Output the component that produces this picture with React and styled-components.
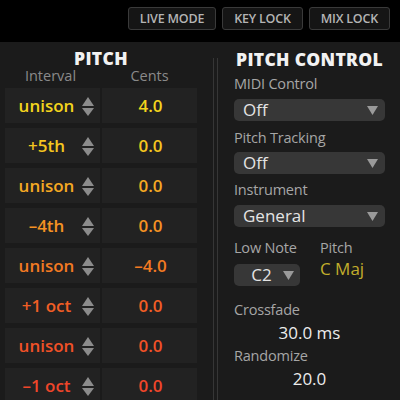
import React from 'react'
import styled, { createGlobalStyle } from 'styled-components'

const GlobalStyle = createGlobalStyle`
  html, body {
    margin: 0;
    padding: 0;
    background: #1b1b1b;
  }
  body {
    font-family: "Open Sans", "Noto Sans", sans-serif;
  }
`

const rows = [
  { interval: 'unison', cents: '4.0', color: '#f4d51d' },
  { interval: '+5th', cents: '0.0', color: '#f5c61f' },
  { interval: 'unison', cents: '0.0', color: '#f5a923' },
  { interval: '\u20134th', cents: '0.0', color: '#f59223' },
  { interval: 'unison', cents: '\u20134.0', color: '#f37a22' },
  { interval: '+1 oct', cents: '0.0', color: '#f25e25' },
  { interval: 'unison', cents: '0.0', color: '#f15127' },
  { interval: '\u20131 oct', cents: '0.0', color: '#f0462a' },
]

function Stepper() {
  return (
    <svg width="12" height="19" viewBox="0 0 12 19">
      <path d="M6 0 L12 9 L0 9 Z" fill="#8c8c8c" />
      <path d="M0 11 L12 11 L6 19 Z" fill="#8c8c8c" />
    </svg>
  )
}

function Caret() {
  return (
    <svg width="11" height="9" viewBox="0 0 11 9">
      <path d="M0 0 L11 0 L5.5 9 Z" fill="#9a9a9a" />
    </svg>
  )
}

function App() {
  return (
    <Page>
      <GlobalStyle />
      <TopBar>
        <ModeButton>LIVE MODE</ModeButton>
        <ModeButton>KEY LOCK</ModeButton>
        <ModeButton>MIX LOCK</ModeButton>
      </TopBar>

      <Main>
        <PitchColumn>
          <PitchTitle>PITCH</PitchTitle>
          <HeaderRow>
            <span>Interval</span>
            <span>Cents</span>
          </HeaderRow>
          <Grid>
            {rows.map((r, i) => (
              <React.Fragment key={i}>
                <IntervalCell $color={r.color}>
                  <span>{r.interval}</span>
                  <StepBox><Stepper /></StepBox>
                </IntervalCell>
                <CentsCell $color={r.color}>{r.cents}</CentsCell>
              </React.Fragment>
            ))}
          </Grid>
        </PitchColumn>

        <Divider />

        <ControlColumn>
          <Title>PITCH CONTROL</Title>
          <Label $top={7}>MIDI Control</Label>
          <Select $top={7}><span>Off</span><Caret /></Select>
          <Label $top={9}>Pitch Tracking</Label>
          <Select $top={6}><span>Off</span><Caret /></Select>
          <Label $top={8}>Instrument</Label>
          <Select $top={7}><span>General</span><Caret /></Select>

          <NoteRow>
            <NoteField>
              <Label>Low Note</Label>
              <SmallSelect><span>C2</span><Caret /></SmallSelect>
            </NoteField>
            <NoteField>
              <Label>Pitch</Label>
              <KeyValue>C Maj</KeyValue>
            </NoteField>
          </NoteRow>

          <Label $top={16}>Crossfade</Label>
          <Value>30.0 ms</Value>
          <Label $top={6}>Randomize</Label>
          <Value>20.0</Value>
        </ControlColumn>
      </Main>
    </Page>
  )
}

const Page = styled.div`
  width: 400px;
  height: 400px;
  overflow: hidden;
  background: #1b1b1b;
`

const TopBar = styled.div`
  height: 42px;
  background: #000;
  display: flex;
  justify-content: flex-end;
  align-items: flex-start;
  gap: 6px;
  padding: 7px 10px 0 0;
  box-sizing: border-box;
`

const ModeButton = styled.div`
  height: 23px;
  box-sizing: border-box;
  padding: 0 11px;
  display: flex;
  align-items: center;
  border: 1px solid #3a3a3a;
  border-radius: 3px;
  background: #151515;
  color: #b4b4b4;
  font-size: 12.5px;
  font-weight: 600;
  letter-spacing: -0.2px;
`

const Main = styled.div`
  display: flex;
  height: 358px;
  background: #1b1b1b;
`

const PitchColumn = styled.div`
  width: 212px;
  padding: 6px 0 0 5px;
  box-sizing: border-box;
  display: flex;
  flex-direction: column;
`

const Title = styled.div`
  text-align: center;
  color: #f2f2f2;
  font-weight: 800;
  font-size: 17.5px;
  line-height: 20px;
  letter-spacing: 0.3px;
`

const PitchTitle = styled(Title)`
  width: 192px;
`

const HeaderRow = styled.div`
  display: grid;
  grid-template-columns: 95px 95px;
  column-gap: 2px;
  color: #8a8a8a;
  font-size: 14.5px;
  line-height: 16px;
  span {
    text-align: center;
  }
  span:first-child {
    padding-right: 4px;
  }
`

const Grid = styled.div`
  margin-top: 4px;
  display: grid;
  grid-template-columns: 95px 95px;
  grid-auto-rows: 35px;
  column-gap: 2px;
  row-gap: 5px;
`

const Cell = styled.div`
  background: #222222;
  color: ${p => p.$color};
  font-size: 17px;
  font-weight: 600;
  display: flex;
  align-items: center;
`

const IntervalCell = styled(Cell)`
  span {
    flex: 1;
    text-align: center;
    padding-left: 6px;
  }
`

const StepBox = styled.div`
  width: 16px;
  display: flex;
  padding-right: 2px;
  padding-top: 1px;
`

const CentsCell = styled(Cell)`
  justify-content: center;
  padding-left: 2px;
`

const Divider = styled.div`
  margin-top: 16px;
  width: 3px;
  margin-left: 1px;
  border-left: 1px solid #363636;
  border-right: 1px solid #363636;
`

const ControlColumn = styled.div`
  flex: 1;
  padding: 7px 15px 0 16px;
  display: flex;
  flex-direction: column;
  align-items: stretch;
`

const Label = styled.div`
  margin-top: ${p => p.$top || 0}px;
  color: #a6a6a6;
  font-size: 14.5px;
  line-height: 16px;
  letter-spacing: -0.2px;
`

const Select = styled.div`
  margin-top: ${p => p.$top || 0}px;
  height: 22px;
  border-radius: 5px;
  background: #373737;
  display: flex;
  align-items: center;
  justify-content: space-between;
  padding: 0 7px 0 9px;
  color: #e4e4e4;
  font-size: 17px;
  span {
    line-height: 22px;
  }
`

const NoteRow = styled.div`
  margin-top: 13px;
  display: flex;
  gap: 20px;
`

const NoteField = styled.div`
  display: flex;
  flex-direction: column;
  gap: 8px;
`

const SmallSelect = styled(Select)`
  width: 66px;
  box-sizing: border-box;
  padding: 0 6px 0 0;
  span {
    flex: 1;
    text-align: center;
    padding-left: 6px;
  }
`

const KeyValue = styled.div`
  color: #c2ae2c;
  font-size: 17px;
  font-weight: 500;
  line-height: 18px;
  margin-top: -4px;
`

const Value = styled.div`
  margin-top: 6px;
  text-align: center;
  color: #ececec;
  font-size: 17px;
  line-height: 18px;
`

export default App
